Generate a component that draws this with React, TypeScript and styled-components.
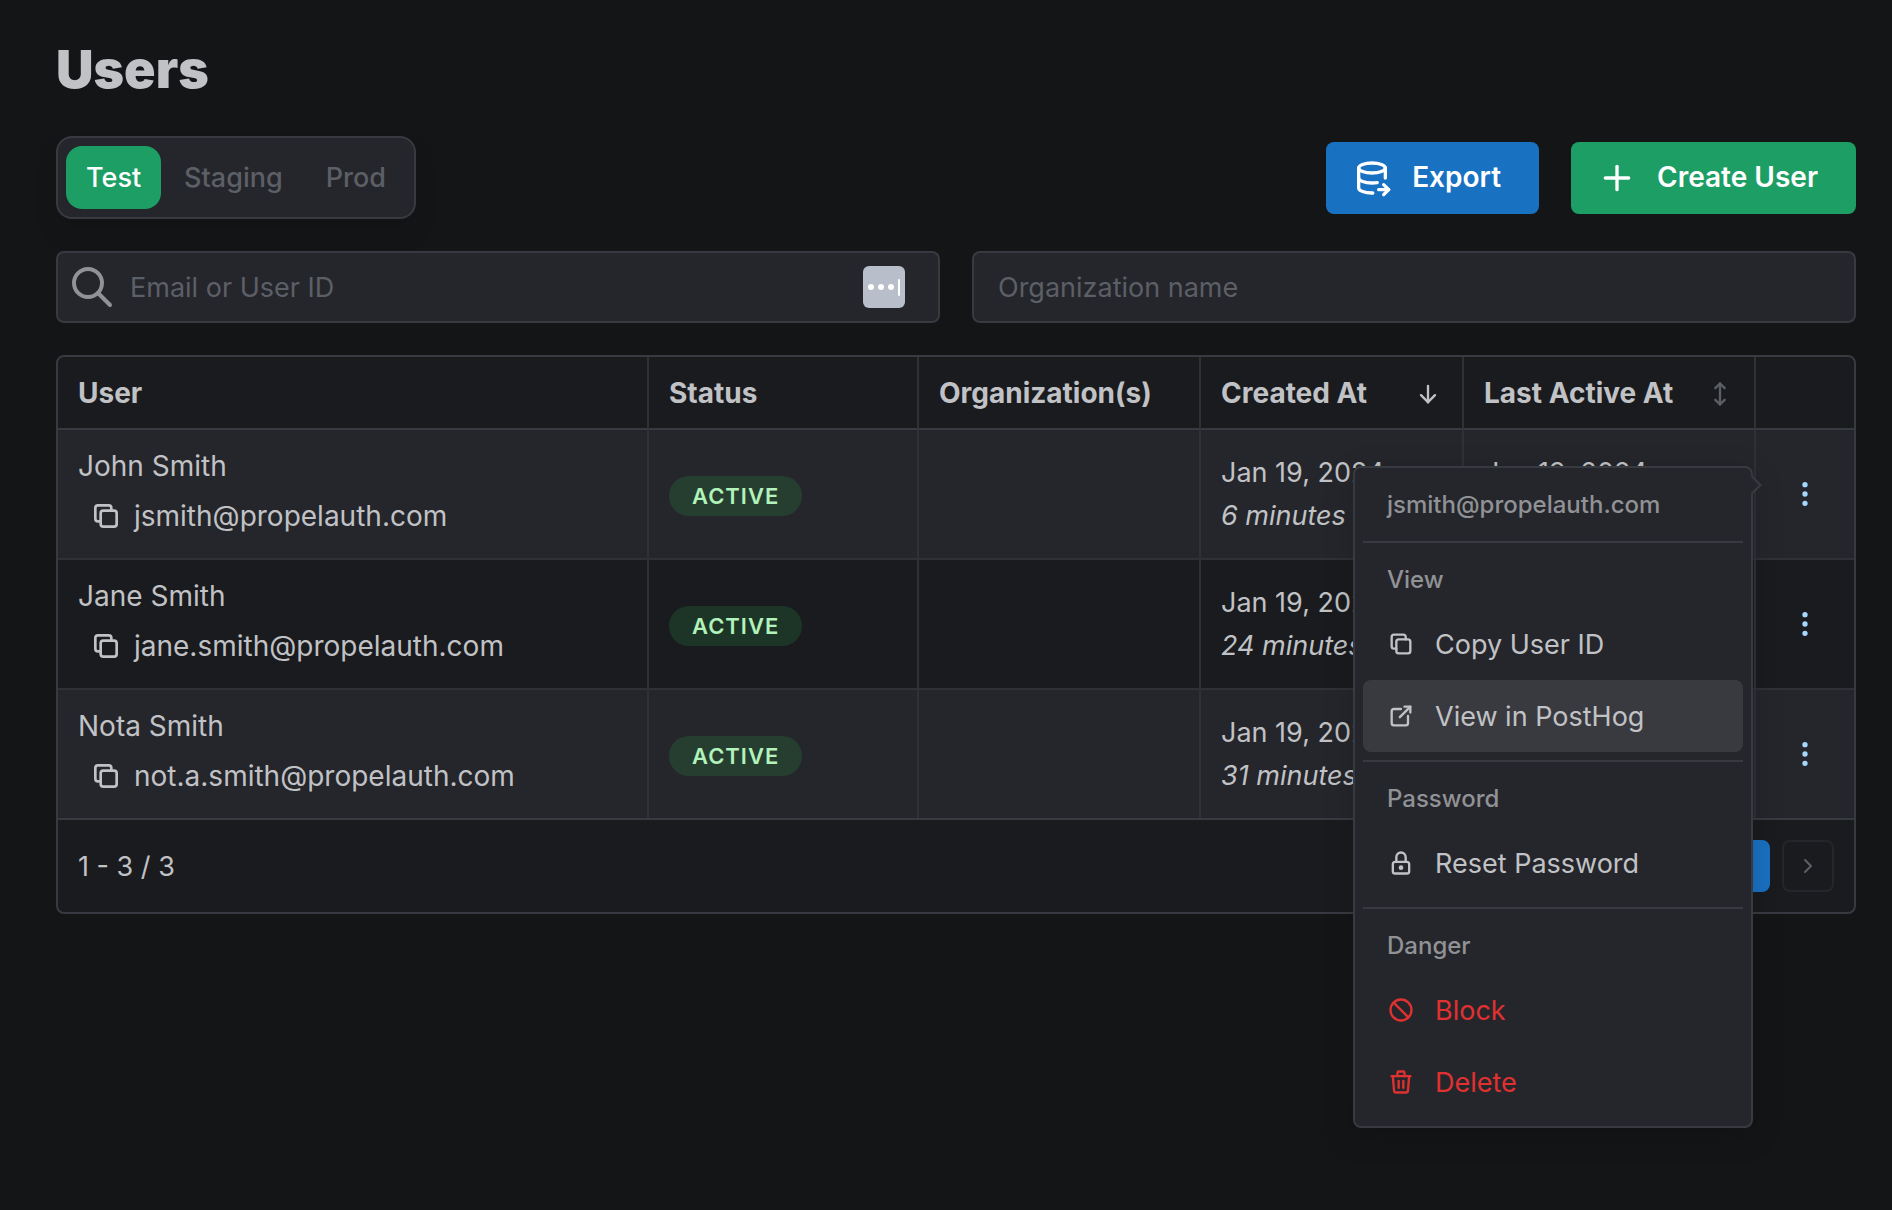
import React, { useState } from "react";
import styled, { createGlobalStyle, css } from "styled-components";
import {
  TbArrowDown,
  TbArrowsVertical,
  TbBan,
  TbChevronLeft,
  TbChevronRight,
  TbDatabaseExport,
  TbDotsVertical,
  TbExternalLink,
  TbLock,
  TbPlus,
  TbSearch,
  TbTrash,
} from "react-icons/tb";

const color = {
  page: "#141517",
  panel: "#1a1b1e",
  raised: "#25262b",
  hover: "#393a3f",
  line: "#373a40",
  softLine: "#2f3136",
  text: "#c1c2c5",
  muted: "#909296",
  faint: "#5c5f66",
  green: "#1c9e65",
  blue: "#1971c2",
  red: "#e03131",
  lightBlue: "#a5d8ff",
};

const GlobalStyle = createGlobalStyle`
  *, *::before, *::after { box-sizing: border-box; }
  body {
    margin: 0;
    background: ${color.page};
    color: ${color.text};
    font-family: Inter, "Liberation Sans", sans-serif;
    font-size: 28px;
    line-height: 43px;
  }
  button, input { font: inherit; color: inherit; }
  button { border: 0; margin: 0; padding: 0; background: none; cursor: pointer; }
  svg { display: block; flex: none; }
`;

const Page = styled.main`
  display: flex;
  flex-direction: column;
  gap: 32px;
  min-height: 100vh;
  padding: 36px 36px 36px 56px;
`;

const Title = styled.h1`
  margin: 0;
  font-size: 52px;
  font-weight: 900;
  line-height: 68px;
`;

const Toolbar = styled.div`
  display: flex;
  align-items: center;
  justify-content: space-between;
`;

const Tabs = styled.div`
  display: flex;
  gap: 3px;
  padding: 8px;
  border: 2px solid ${color.line};
  border-radius: 16px;
  background: ${color.raised};
  box-shadow: 0 16px 24px rgba(0, 0, 0, 0.08);
`;

const Tab = styled.button<{ $active: boolean }>`
  padding: 10px 20px;
  border-radius: 16px;
  font-size: 27px;
  font-weight: 500;
  color: ${(p) => (p.$active ? "#fff" : color.faint)};
  background: ${(p) => (p.$active ? color.green : "transparent")};
`;

const Actions = styled.div`
  display: flex;
  gap: 32px;
`;

const ActionButton = styled.button<{ $fill: string }>`
  display: flex;
  align-items: center;
  gap: 20px;
  height: 72px;
  padding: 0 38px 0 26px;
  border-radius: 8px;
  font-weight: 600;
  color: #fff;
  background: ${(p) => p.$fill};
`;

const Filters = styled.div`
  display: grid;
  grid-template-columns: 1fr 1fr;
  gap: 32px;
`;

const Field = styled.label<{ $icon?: boolean }>`
  display: flex;
  align-items: center;
  gap: 14px;
  height: 72px;
  padding: 0 ${(p) => (p.$icon ? "33px" : "24px")} 0 ${(p) => (p.$icon ? "10px" : "24px")};
  border: 2px solid ${color.line};
  border-radius: 8px;
  background: ${color.raised};
  color: ${color.muted};
`;

const FieldInput = styled.input`
  flex: 1;
  min-width: 0;
  padding: 0;
  border: 0;
  outline: 0;
  background: none;
  color: ${color.text};
  font-size: 27px;
  &::placeholder { color: ${color.faint}; opacity: 1; }
`;

const Panel = styled.section`
  border: 2px solid ${color.line};
  border-radius: 8px;
  background: ${color.panel};
`;

const Table = styled.table`
  width: 100%;
  table-layout: fixed;
  border-spacing: 0;
`;

const Col = styled.col<{ $w?: number }>`
  ${(p) => p.$w && css`width: ${p.$w}px;`}
`;

const Th = styled.th`
  height: 73px;
  padding: 2px 20px 0;
  text-align: left;
  font-weight: 700;
  border-bottom: 2px solid ${color.line};
  &:not(:last-child) { border-right: 2px solid ${color.softLine}; }
`;

const HeadRow = styled.div<{ $dim?: boolean }>`
  display: flex;
  align-items: center;
  justify-content: space-between;
  svg { color: ${(p) => (p.$dim ? color.faint : color.text)}; }
`;

const Row = styled.tr`
  &:nth-child(odd) { background: ${color.raised}; }
  &:not(:last-child) > td { border-bottom: 2px solid ${color.softLine}; }
`;

const Td = styled.td`
  padding: 14px 20px;
  &:not(:last-child) { border-right: 2px solid ${color.softLine}; }
`;

const Name = styled.div`
  line-height: 44px;
`;

const EmailLine = styled.div`
  display: flex;
  align-items: center;
`;

const IconButton = styled.button`
  display: grid;
  place-items: center;
  width: 56px;
  height: 56px;
`;

const Badge = styled.span`
  display: inline-block;
  padding: 0 23px;
  border-radius: 20px;
  font-size: 22px;
  font-weight: 600;
  line-height: 40px;
  letter-spacing: 1px;
  text-transform: uppercase;
  color: #b2f2bb;
  background: rgba(47, 158, 68, 0.2);
`;

const DateText = styled.div<{ $relative?: boolean }>`
  font-size: 27px;
  font-style: ${(p) => (p.$relative ? "italic" : "normal")};
`;

const MenuAnchor = styled.div`
  position: relative;
  width: 56px;
  margin: 0 auto;
  color: ${color.lightBlue};
`;

const Menu = styled.div`
  position: absolute;
  z-index: 10;
  top: 0;
  right: calc(100% + 24px);
  width: 400px;
  padding: 8px;
  border: 2px solid ${color.line};
  border-radius: 8px;
  background: ${color.raised};
  color: ${color.text};
  box-shadow: 0 8px 32px rgba(0, 0, 0, 0.16);
  &::after {
    content: "";
    position: absolute;
    top: 10px;
    right: -8px;
    width: 14px;
    height: 14px;
    border: 2px solid ${color.line};
    border-width: 2px 2px 0 0;
    background: ${color.raised};
    transform: rotate(45deg);
  }
`;

const MenuLabel = styled.div`
  padding: 10px 24px;
  font-size: 24px;
  font-weight: 500;
  line-height: 37px;
  color: ${color.muted};
`;

const MenuItem = styled.button<{ $danger?: boolean; $active?: boolean }>`
  display: flex;
  align-items: center;
  gap: 20px;
  width: 100%;
  height: 72px;
  padding: 0 24px;
  border-radius: 8px;
  font-size: 27px;
  color: ${(p) => (p.$danger ? color.red : color.text)};
  background: ${(p) => (p.$active ? color.hover : "transparent")};
`;

const Divider = styled.hr`
  height: 2px;
  margin: 8px 0;
  border: 0;
  background: ${color.line};
`;

const Footer = styled.footer`
  display: flex;
  align-items: center;
  justify-content: space-between;
  padding: 20px;
  border-top: 2px solid ${color.line};
  font-size: 27px;
`;

const Pager = styled.nav`
  display: flex;
  gap: 12px;
`;

const PageButton = styled.button<{ $current?: boolean }>`
  display: grid;
  place-items: center;
  width: 52px;
  height: 52px;
  border: 2px solid ${(p) => (p.$current ? color.blue : color.raised)};
  border-radius: 8px;
  color: ${(p) => (p.$current ? "#fff" : color.faint)};
  background: ${(p) => (p.$current ? color.blue : "transparent")};
`;

function CopyIcon({ size }: { size: number }) {
  return (
    <svg width={size} height={size} viewBox="0 0 24 24" fill="none" stroke="currentColor" strokeWidth="2" strokeLinejoin="round" strokeLinecap="round">
      <rect x="8" y="8" width="12" height="12" rx="2" />
      <path d="M16 8V6a2 2 0 0 0-2-2H6a2 2 0 0 0-2 2v8a2 2 0 0 0 2 2h2" />
    </svg>
  );
}

function AutofillIcon() {
  return (
    <svg width="42" height="42" viewBox="0 0 42 42" fill="#fff">
      <rect width="42" height="42" rx="6" fill="#b9bfca" />
      <circle cx="8" cy="21" r="3" />
      <circle cx="18" cy="21" r="3" />
      <circle cx="28" cy="21" r="3" />
      <rect x="35" y="13" width="2" height="17" rx="1" />
    </svg>
  );
}

const users = [
  { name: "John Smith", email: "jsmith@propelauth.com", date: "Jan 19, 2024", ago: "6 minutes ago" },
  { name: "Jane Smith", email: "jane.smith@propelauth.com", date: "Jan 19, 2024", ago: "24 minutes ago" },
  { name: "Nota Smith", email: "not.a.smith@propelauth.com", date: "Jan 19, 2024", ago: "31 minutes ago" },
];

const environments = ["Test", "Staging", "Prod"];

function UserMenu({ email }: { email: string }) {
  return (
    <Menu role="menu">
      <MenuLabel>{email}</MenuLabel>
      <Divider />
      <MenuLabel>View</MenuLabel>
      <MenuItem role="menuitem"><CopyIcon size={28} />Copy User ID</MenuItem>
      <MenuItem role="menuitem" $active><TbExternalLink size={28} />View in PostHog</MenuItem>
      <Divider />
      <MenuLabel>Password</MenuLabel>
      <MenuItem role="menuitem"><TbLock size={28} />Reset Password</MenuItem>
      <Divider />
      <MenuLabel>Danger</MenuLabel>
      <MenuItem role="menuitem" $danger><TbBan size={28} />Block</MenuItem>
      <MenuItem role="menuitem" $danger><TbTrash size={28} />Delete</MenuItem>
    </Menu>
  );
}

export default function App() {
  const [env, setEnv] = useState("Test");
  const [openRow, setOpenRow] = useState<number | null>(0);

  return (
    <Page>
      <GlobalStyle />
      <Title>Users</Title>

      <Toolbar>
        <Tabs role="tablist">
          {environments.map((e) => (
            <Tab key={e} role="tab" aria-selected={e === env} $active={e === env} onClick={() => setEnv(e)}>
              {e}
            </Tab>
          ))}
        </Tabs>
        <Actions>
          <ActionButton $fill={color.blue}><TbDatabaseExport size={40} />Export</ActionButton>
          <ActionButton $fill={color.green}><TbPlus size={40} />Create User</ActionButton>
        </Actions>
      </Toolbar>

      <Filters>
        <Field $icon>
          <TbSearch size={48} />
          <FieldInput type="text" placeholder="Email or User ID" aria-label="Email or User ID" />
          <AutofillIcon />
        </Field>
        <Field>
          <FieldInput type="text" placeholder="Organization name" aria-label="Organization name" />
        </Field>
      </Filters>

      <Panel>
        <Table>
          <colgroup>
            <Col />
            <Col $w={270} />
            <Col $w={282} />
            <Col $w={263} />
            <Col $w={292} />
            <Col $w={98} />
          </colgroup>
          <thead>
            <tr>
              <Th>User</Th>
              <Th>Status</Th>
              <Th>Organization(s)</Th>
              <Th><HeadRow>Created At<TbArrowDown size={28} /></HeadRow></Th>
              <Th><HeadRow $dim>Last Active At<TbArrowsVertical size={28} /></HeadRow></Th>
              <Th aria-label="Actions" />
            </tr>
          </thead>
          <tbody>
            {users.map((u, i) => (
              <Row key={u.email}>
                <Td>
                  <Name>{u.name}</Name>
                  <EmailLine>
                    <IconButton aria-label="Copy email"><CopyIcon size={32} /></IconButton>
                    {u.email}
                  </EmailLine>
                </Td>
                <Td><Badge>Active</Badge></Td>
                <Td />
                <Td><DateText>{u.date}</DateText><DateText $relative>{u.ago}</DateText></Td>
                <Td><DateText>{u.date}</DateText><DateText $relative>{u.ago}</DateText></Td>
                <Td>
                  <MenuAnchor>
                    <IconButton aria-label="User actions" onClick={() => setOpenRow(openRow === i ? null : i)}>
                      <TbDotsVertical size={32} />
                    </IconButton>
                    {openRow === i && <UserMenu email={u.email} />}
                  </MenuAnchor>
                </Td>
              </Row>
            ))}
          </tbody>
        </Table>
        <Footer>
          <span>1 - 3 / 3</span>
          <Pager aria-label="Pagination">
            <PageButton aria-label="Previous page"><TbChevronLeft size={24} /></PageButton>
            <PageButton $current>1</PageButton>
            <PageButton aria-label="Next page"><TbChevronRight size={24} /></PageButton>
          </Pager>
        </Footer>
      </Panel>
    </Page>
  );
}
